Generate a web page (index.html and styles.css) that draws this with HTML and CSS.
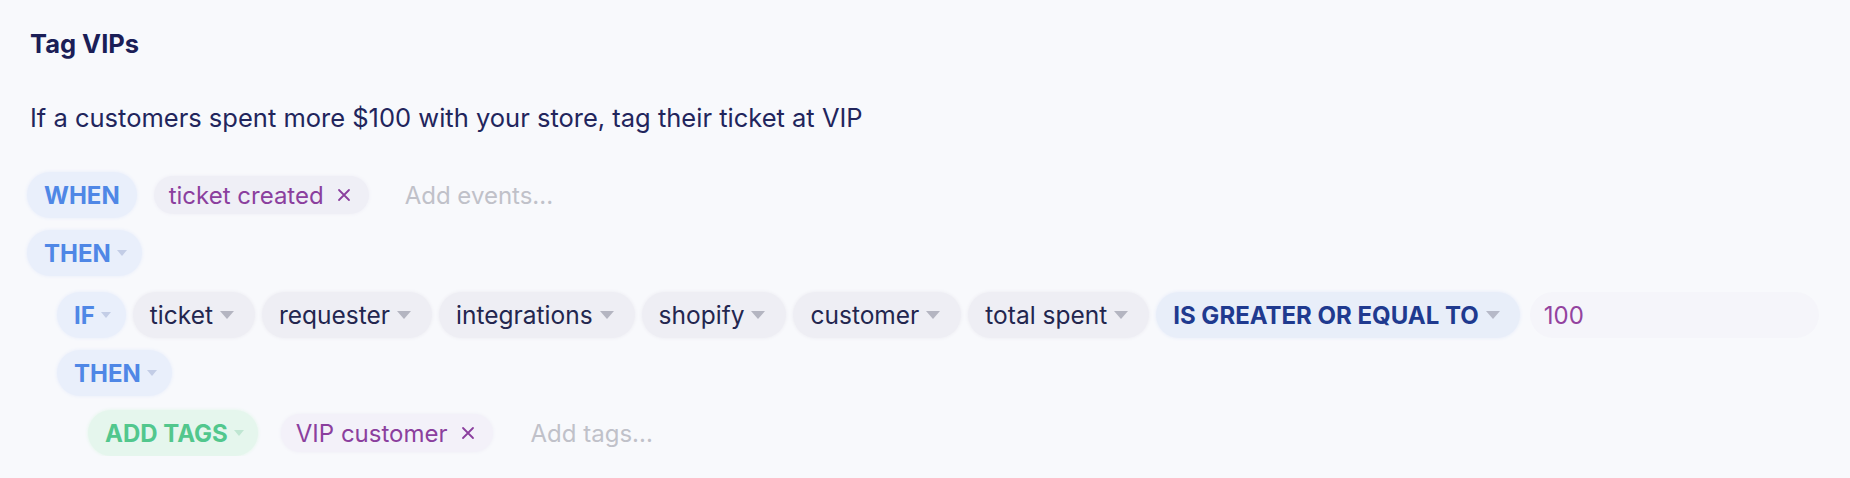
FILE: index.html
```html
<!DOCTYPE html>
<html>
<head>
<meta charset="utf-8">
<link rel="stylesheet" href="styles.css">
</head>
<body>
<div class="rule">
  <h1 class="title">Tag VIPs</h1>
  <p class="desc">If a customers spent more $100 with your store, tag their ticket at VIP</p>

  <div class="row row-when">
    <span class="chip kw">WHEN</span>
    <div class="tags">
      <span class="chip tag">ticket created <svg class="x" viewBox="0 0 14 14" width="14" height="14"><path d="M2 2 L12 12 M12 2 L2 12" stroke="currentColor" stroke-width="1.8" stroke-linecap="round" fill="none"/></svg></span>
      <span class="placeholder">Add events...</span>
    </div>
  </div>

  <div class="row row-then">
    <span class="chip kw has-caret">THEN <span class="caret"></span></span>
  </div>

  <div class="row row-if indent1">
    <span class="chip kw has-caret">IF <span class="caret"></span></span>
    <span class="chip field">ticket <span class="caret"></span></span>
    <span class="chip field">requester <span class="caret"></span></span>
    <span class="chip field">integrations <span class="caret"></span></span>
    <span class="chip field">shopify <span class="caret"></span></span>
    <span class="chip field">customer <span class="caret"></span></span>
    <span class="chip field">total spent <span class="caret"></span></span>
    <span class="chip op">IS GREATER OR EQUAL TO <span class="caret"></span></span>
    <span class="value">100</span>
  </div>

  <div class="row row-then2 indent1">
    <span class="chip kw has-caret">THEN <span class="caret"></span></span>
  </div>

  <div class="row indent2">
    <span class="chip action">ADD TAGS <span class="caret"></span></span>
    <div class="tags tags-wide">
      <span class="chip tag tag-vip">VIP customer <svg class="x" viewBox="0 0 14 14" width="14" height="14"><path d="M2 2 L12 12 M12 2 L2 12" stroke="currentColor" stroke-width="1.8" stroke-linecap="round" fill="none"/></svg></span>
      <span class="placeholder">Add tags...</span>
    </div>
  </div>
</div>
</body>
</html>
```
FILE: styles.css
```css
html, body {
  margin: 0;
  padding: 0;
  background: #f8f9fc;
}
body {
  font-family: Inter, "Noto Sans", sans-serif;
  color: #1d2058;
}
.rule {
  padding: 28px 0 0 30px;
  display: flex;
  flex-direction: column;
}
.title {
  margin: 0;
  font-size: 25.5px;
  line-height: 32px;
  font-weight: 700;
  color: #1b1e57;
}
.desc {
  margin: 42px 0 38px 0;
  font-size: 25.5px;
  line-height: 32px;
  color: #22255c;
}
.row {
  display: flex;
  align-items: center;
  gap: 7px;
  margin-left: -3px;
}
.row-when { margin-bottom: 12px; }
.row-then { margin-bottom: 16px; }
.row-if { margin-bottom: 12px; }
.row-then2 { margin-bottom: 14px; }
.indent1 { margin-left: 27px; }
.indent2 { margin-left: 58px; }
.chip {
  display: inline-flex;
  align-items: center;
  height: 46px;
  padding: 0 17px;
  border-radius: 23px;
  font-size: 24px;
  white-space: nowrap;
  box-sizing: border-box;
}
.kw {
  background: #e9effb;
  box-shadow: 0 0 3px 1px #edf1fb;
  color: #4f87e6;
  font-weight: 700;
}
.kw.has-caret { padding-right: 15px; }
.field {
  padding: 0 21px 0 17px;
  font-size: 24.5px;
  background: #eeeef4;
  box-shadow: 0 0 3px 1px #f0f0f5;
  color: #23264f;
}
.op {
  padding: 0 20px 0 17px;
  background: #e8eef9;
  box-shadow: 0 0 3px 1px #ecf0fa;
  color: #1f3a8f;
  font-weight: 700;
}
.action {
  padding: 0 14px 0 17px;
  background: #e5f6ed;
  box-shadow: 0 0 3px 1px #eaf7f0;
  color: #52c78d;
  font-weight: 700;
}
.caret {
  display: inline-block;
  width: 0;
  height: 0;
  margin-left: 7px;
  border-left: 7px solid transparent;
  border-right: 7px solid transparent;
  border-top: 8px solid #b4b5c1;
}
.kw .caret,
.action .caret {
  margin-left: 6px;
  border-left-width: 5px;
  border-right-width: 5px;
  border-top-width: 6px;
}
.kw .caret { border-top-color: #c3cde6; }
.action .caret { border-top-color: #bfe6d2; }
.op .caret { border-top-color: #b6b9c8; }
.tags {
  display: flex;
  align-items: center;
  gap: 36px;
  margin-left: 10px;
}
.tags-wide { margin-left: 16px; gap: 38px; }
.tag {
  height: 38px;
  padding: 0 18px 0 15px;
  background: #efeff6;
  box-shadow: 0 0 3px 1px #f2f2f8;
  color: #8b3f9e;
}
.tag-vip {
  background: #f3f1f9;
}
.x {
  margin-left: 13px;
  width: 14px;
  height: 14px;
}
.placeholder {
  font-size: 24px;
  color: #c0c1c9;
}
.value {
  display: flex;
  align-items: center;
  height: 46px;
  width: 289px;
  margin-left: 3px;
  padding: 0 14px;
  box-sizing: border-box;
  border-radius: 23px;
  background: #f5f5fa;
  color: #93439f;
  font-size: 24px;
}
```
